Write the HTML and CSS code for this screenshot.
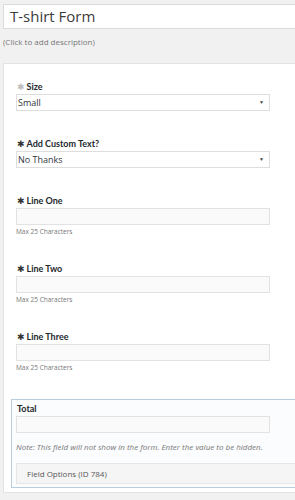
FILE: index.html
```
<!DOCTYPE html>
<html lang="en">
<head>
    <meta charset="UTF-8">
    <meta name="viewport" content="width=device-width, initial-scale=1.0">
    <title>T-shirt Form</title>
    <link rel="stylesheet" href="styles.css">
</head>
<body>
    <div class="form-title">T-shirt Form</div>
    <p class="form-description">(Click to add description)</p>

    <div class="form-panel">
        <div class="field field-select">
            <label><span class="required light">&#10033;</span>Size</label>
            <div class="select-box">Small<span class="arrow">&#9660;</span></div>
        </div>

        <div class="field field-select">
            <label><span class="required">&#10033;</span>Add Custom Text?</label>
            <div class="select-box">No Thanks<span class="arrow">&#9660;</span></div>
        </div>

        <div class="field">
            <label><span class="required">&#10033;</span>Line One</label>
            <div class="text-box"></div>
            <div class="help">Max 25 Characters</div>
        </div>

        <div class="field">
            <label><span class="required">&#10033;</span>Line Two</label>
            <div class="text-box"></div>
            <div class="help">Max 25 Characters</div>
        </div>

        <div class="field">
            <label><span class="required">&#10033;</span>Line Three</label>
            <div class="text-box"></div>
            <div class="help">Max 25 Characters</div>
        </div>

        <!-- hidden field, selected -->
        <div class="hidden-field">
            <label>Total</label>
            <div class="text-box"></div>
            <p class="note">Note: This field will not show in the form. Enter the value to be hidden.</p>
            <div class="field-options">Field Options (ID 784)</div>
        </div>
    </div>
</body>
</html>
```

FILE: styles.css
```
html, body {
    overflow: hidden;
}

body {
    margin: 0;
    padding: 4px 0 0 3px;
    width: 340px;
    background: #f1f1f1;
    color: #32373c;
    font-family: "Open Sans", "Noto Sans", sans-serif;
}

.form-title {
    height: 23px;
    line-height: 23px;
    padding: 0 6px;
    background: #fff;
    border: 1px solid #dcdcdc;
    font-size: 15px;
    color: #3c3c3c;
}

.form-description {
    margin: 7px 0 0;
    height: 23px;
    font-size: 8px;
    line-height: 11px;
    color: #777;
}

.form-panel {
    margin-top: 4px;
    padding: 17px 0 4px 12px;
    background: #fff;
    border: 1px solid #e3e3e3;
}

.field {
    margin-bottom: 26px;
}

.field-select {
    margin-bottom: 27px;
}

label {
    display: block;
    height: 12px;
    margin: 0 0 1px 1px;
    font-family: Lato, "Open Sans", sans-serif;
    font-size: 9px;
    line-height: 12px;
    font-weight: bold;
    color: #23282d;
}

.required {
    margin-right: 2px;
    font-family: "DejaVu Sans", sans-serif;
    font-size: 9px;
    font-weight: normal;
    color: #333;
}

.required.light {
    color: #bdbdbd;
}

.select-box {
    position: relative;
    width: 250px;
    height: 15px;
    padding: 0 1px;
    line-height: 15px;
    font-size: 9px;
    color: #32373c;
    background: #fff;
    border: 1px solid #dedede;
}

.select-box .arrow {
    position: absolute;
    right: 5px;
    top: 0;
    font-size: 5px;
    color: #444;
}

.text-box {
    width: 252px;
    height: 15px;
    background: #fafafa;
    border: 1px solid #e2e2e2;
}

.help {
    margin-top: 1px;
    height: 11px;
    font-size: 6.5px;
    line-height: 11px;
    color: #777;
}

.hidden-field {
    margin-left: -5px;
    padding: 3px 0 3px 4px;
    background: #fbfcfd;
    border: 1px solid #b9cddc;
}

.note {
    margin: 8px 0 0;
    height: 12px;
    font-size: 8px;
    line-height: 12px;
    font-style: italic;
    color: #777;
}

.field-options {
    margin-top: 10px;
    height: 19px;
    padding-left: 10px;
    line-height: 19px;
    font-size: 8px;
    font-weight: normal;
    color: #555;
    background: #f5f5f5;
    border: 1px solid #e6e6e6;
}
```
